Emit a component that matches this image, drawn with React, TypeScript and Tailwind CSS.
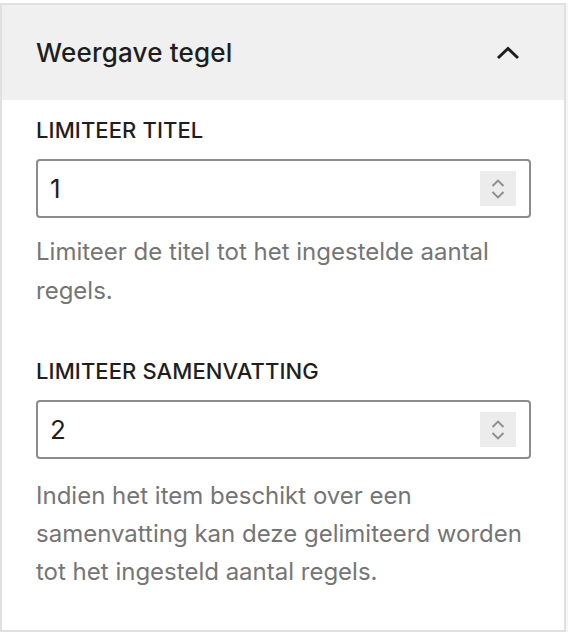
import React from "react";

const font = { fontFamily: "Inter, 'Noto Sans', sans-serif" };

const Stepper: React.FC = () => (
  <div className="flex h-[35px] w-[36px] flex-col items-center justify-center gap-[4px] bg-[#ececec]">
    <svg width="14" height="8" viewBox="0 0 14 8" fill="none">
      <path d="M1.5 7L7 1.6L12.5 7" stroke="#8f8f8f" strokeWidth="2" />
    </svg>
    <svg width="14" height="8" viewBox="0 0 14 8" fill="none">
      <path d="M1.5 1L7 6.4L12.5 1" stroke="#8f8f8f" strokeWidth="2" />
    </svg>
  </div>
);

const NumberField: React.FC<{ value: string }> = ({ value }) => (
  <div className="flex h-[59px] w-[495px] items-center justify-between rounded-[4px] border-2 border-[#8c8c8c] pl-[12px] pr-[13px]">
    <span className="text-[26px] text-[#1e1e1e]">{value}</span>
    <Stepper />
  </div>
);

export default function App() {
  return (
    <div className="h-[634px] w-[568px] bg-white pt-[3px]" style={font}>
      <div className="flex">
        <div className="h-[629px] w-[566px] border-2 border-[#e0e0e0]">
          {/* Header */}
          <div className="flex h-[95px] items-center justify-between bg-[#f0f0f0] pl-[34px] pr-[44px]">
            <span className="text-[26px] font-medium tracking-[0.2px] text-[#1e1e1e]">Weergave tegel</span>
            <svg width="24" height="14" viewBox="0 0 24 14" fill="none">
              <path d="M2 12L12 2.5L22 12" stroke="#1e1e1e" strokeWidth="3" />
            </svg>
          </div>

          {/* Body */}
          <div className="pl-[34px] pt-[17px]">
            <div className="text-[22px] font-medium uppercase leading-[26px] tracking-[0.1px] text-[#1e1e1e]">
              Limiteer titel
            </div>
            <div className="mt-[16px]">
              <NumberField value="1" />
            </div>
            <p className="mt-[14px] w-[500px] text-[24px] leading-[39px] text-[#757575]">
              Limiteer de titel tot het ingestelde aantal regels.
            </p>

            <div className="mt-[48px] text-[22px] font-medium uppercase leading-[26px] tracking-[0.1px] text-[#1e1e1e]">
              Limiteer samenvatting
            </div>
            <div className="mt-[16px]">
              <NumberField value="2" />
            </div>
            <p className="mt-[18px] w-[500px] text-[24px] leading-[38px] text-[#757575]">
              Indien het item beschikt over een samenvatting kan deze gelimiteerd worden tot het ingesteld aantal regels.
            </p>
          </div>
        </div>
        <div className="h-[629px] w-[2px] bg-[#f6f6f6]" />
      </div>
    </div>
  );
}
